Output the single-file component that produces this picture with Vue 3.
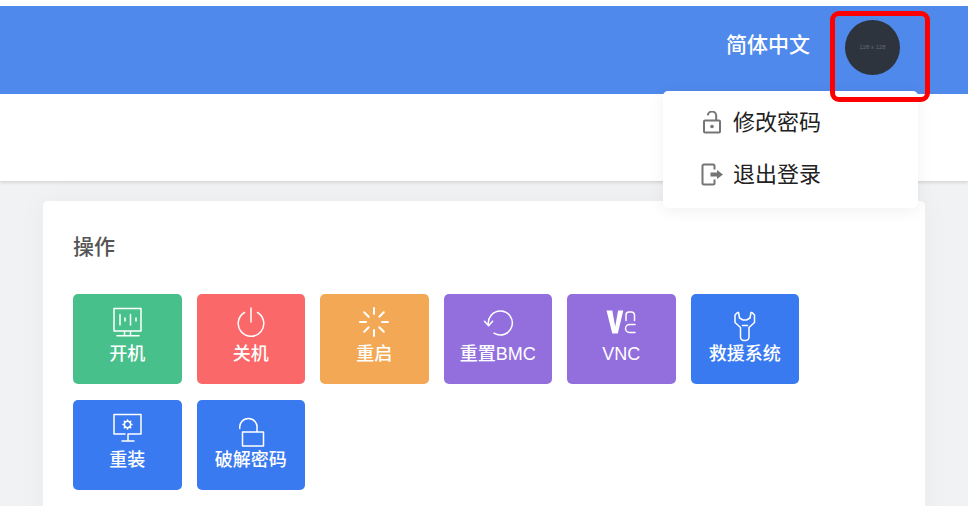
<template>
  <div class="page">
    <header class="navbar">
      <button type="button" class="lang">简体中文</button>
      <div class="user">
        <button type="button" class="avatar" aria-haspopup="menu" aria-expanded="true">128 x 128</button>
        <span class="marker"></span>
        <ul class="menu">
          <li>
            <a href="#password">
              <svg viewBox="0 0 24 24" width="24" height="24">
                <path d="M5 9.500h14a1 1 0 0 1 1 1v10a1 1 0 0 1-1 1H5a1 1 0 0 1-1-1v-10a1 1 0 0 1 1-1zM16.200 9.500V5.200a4.200 4.200 0 0 0-8.400-.8" />
                <circle cx="12" cy="15.500" r="1.800" class="solid" />
              </svg>
              <span>修改密码</span>
            </a>
          </li>
          <li>
            <a href="#logout">
              <svg viewBox="0 0 24 24" width="24" height="24">
                <path d="M14.500 6.500V3A1.500 1.500 0 0 0 13 1.500H4A1.500 1.500 0 0 0 2.500 3v17A1.500 1.500 0 0 0 4 21.500h9a1.500 1.500 0 0 0 1.500-1.500v-3.500" />
                <path d="M10.500 9.500H17V7l6 4.500-6 4.500v-2.500h-6.500z" class="solid" />
              </svg>
              <span>退出登录</span>
            </a>
          </li>
        </ul>
      </div>
    </header>
    <div class="subbar"></div>

    <main class="content">
      <section class="card">
        <h2>操作</h2>
        <div class="actions">
          <button
            v-for="action in actions"
            :key="action.icon"
            type="button"
            class="action"
            :class="action.color"
          >
            <svg viewBox="0 0 32 32" width="32" height="32">
              <template v-if="action.icon === 'power-on'">
                <path d="M3 2.500h27v22.500H3zM13.500 25v4.500M19.500 25v4.500M6 29.800h22" />
                <path d="M9 8.500v10.500M14 12v3M19.500 8.500v10.500M25 12v3" />
              </template>
              <template v-else-if="action.icon === 'power-off'">
                <path d="M16 2v14M9.500 6.500a12.800 12.800 0 1 0 13 0" />
              </template>
              <template v-else-if="action.icon === 'restart'">
                <path
                  class="thick"
                  d="M16 2v6M16 24v6M2 16h6M24 16h6M6.200 6.200l4.500 4.500M21.300 21.300l4.500 4.500M25.800 6.200l-4.500 4.500M10.700 21.300l-4.500 4.500"
                />
              </template>
              <template v-else-if="action.icon === 'bmc'">
                <path d="M6.600 19.500A12 12 0 1 1 12 27.200M2.500 15.200l4.100 4.500 4-4.500" />
              </template>
              <template v-else-if="action.icon === 'vnc'">
                <path class="solid" d="M1.500 4.500h5.800l2.900 16 2.900-16h5.200l-5.500 23H7.300z" />
                <path d="M21 14.500V9a3 3 0 0 1 3-3h2.500a3 3 0 0 1 3 3v5.500M30 18.500h-5.500a4 4 0 0 0 0 8H30" />
              </template>
              <template v-else-if="action.icon === 'rescue'">
                <path
                  d="M9.500 6.500h-1L6 9v7.500l5.500 5V31a3.500 3.500 0 0 0 3.500 3.500h1.500A3.500 3.500 0 0 0 20 31v-9.500l5.500-5V9L23 6.500h-1l-1 5.500-3.500 2h-3.500l-3.500-2z"
                />
                <path d="M13.500 19.500h5" />
              </template>
              <template v-else-if="action.icon === 'reinstall'">
                <path d="M14 22H3V2.500h27V22H17v6M11 29h12" />
                <circle cx="16.500" cy="12.500" r="3.200" />
                <path
                  d="M16.500 8v1.300M16.500 15.700v1.300M12 12.500h1.300M19.700 12.500h1.300M13.300 9.300l.9.900M18.800 14.800l.9.900M19.700 9.300l-.9.900M14.200 14.800l-.9.900"
                />
              </template>
              <template v-else>
                <path d="M7.500 20h21v14h-21zM4.800 16.500A8.700 8.700 0 1 1 22 16.500V20" />
              </template>
            </svg>
            <span>{{ action.label }}</span>
          </button>
        </div>
      </section>
    </main>
  </div>
</template>

<script setup>
const actions = [
  { icon: 'power-on', label: '开机', color: 'green' },
  { icon: 'power-off', label: '关机', color: 'red' },
  { icon: 'restart', label: '重启', color: 'orange' },
  { icon: 'bmc', label: '重置BMC', color: 'purple' },
  { icon: 'vnc', label: 'VNC', color: 'purple' },
  { icon: 'rescue', label: '救援系统', color: 'blue' },
  { icon: 'reinstall', label: '重装', color: 'blue' },
  { icon: 'crack', label: '破解密码', color: 'blue' }
]
</script>

<style>
body {
  background: #f0f2f4;
}
</style>

<style scoped>
.page {
  min-height: 100vh;
  box-sizing: border-box;
  overflow: hidden;
  border-top: 6px solid #fff;
  font-family: "Liberation Sans", "Noto Sans CJK SC", sans-serif;
}
button {
  border: 0;
  padding: 0;
  font: inherit;
  cursor: pointer;
}
.navbar {
  position: relative;
  z-index: 1;
  display: flex;
  justify-content: flex-end;
  align-items: center;
  gap: 35px;
  height: 88px;
  box-sizing: border-box;
  padding: 0 68px 6px 0;
  background: #4f89eb;
}
.lang {
  padding-bottom: 4px;
  background: none;
  color: #fff;
  font-size: 21px;
  line-height: 32px;
  font-weight: 500;
}
.user {
  position: relative;
}
.avatar {
  display: block;
  width: 55px;
  height: 55px;
  border-radius: 50%;
  background: #2d343d;
  color: #646a72;
  font-size: 6px;
}
.marker {
  position: absolute;
  z-index: 3;
  inset: -9px -30px -27px -15px;
  border: 5px solid #fe0000;
  border-radius: 9px;
  pointer-events: none;
}
.menu {
  position: absolute;
  z-index: 2;
  top: 71px;
  right: -18px;
  width: 255px;
  box-sizing: border-box;
  margin: 0;
  padding: 6px 0 7px;
  list-style: none;
  background: #fff;
  border-radius: 5px;
  box-shadow: 0 3px 16px rgba(0, 0, 0, .06);
}
.menu a {
  display: flex;
  align-items: center;
  gap: 9px;
  height: 52px;
  padding-left: 37px;
  color: #212121;
  font-size: 22px;
  line-height: 32px;
  text-decoration: none;
}
.menu svg {
  fill: none;
  stroke: #757575;
  stroke-width: 2;
}
.menu .solid {
  fill: #757575;
  stroke: none;
}
.subbar {
  position: relative;
  height: 87px;
  background: #fff;
  box-shadow: 0 1px 4px rgba(0, 0, 0, .16);
}
.content {
  padding: 20px 43px 0;
}
.card {
  min-height: 320px;
  box-sizing: border-box;
  padding: 30px;
  background: #fff;
  border-radius: 5px;
  box-shadow: 0 0 30px rgba(0, 0, 0, .04);
}
h2 {
  margin: 0 0 31px;
  color: #555;
  font-size: 21px;
  line-height: 32px;
  font-weight: 500;
}
.actions {
  display: grid;
  grid-template-columns: repeat(6, 1fr);
  gap: 16px 15px;
  max-width: 726px;
}
.action {
  display: flex;
  flex-direction: column;
  align-items: center;
  height: 90px;
  padding-top: 12px;
  border-radius: 5px;
  color: #fff;
  font-size: 18px;
  line-height: 32px;
  font-weight: 500;
}
.action svg {
  flex: none;
  overflow: visible;
  fill: none;
  stroke: #fff;
  stroke-width: 1.500;
  stroke-linecap: round;
  stroke-linejoin: round;
}
.action .thick {
  stroke-width: 2;
}
.action .solid {
  fill: #fff;
  stroke: none;
}
.green {
  background: #48c08b;
}
.red {
  background: #fa686a;
}
.orange {
  background: #f2a854;
}
.purple {
  background: #936fde;
}
.blue {
  background: #3a7af0;
}
</style>
